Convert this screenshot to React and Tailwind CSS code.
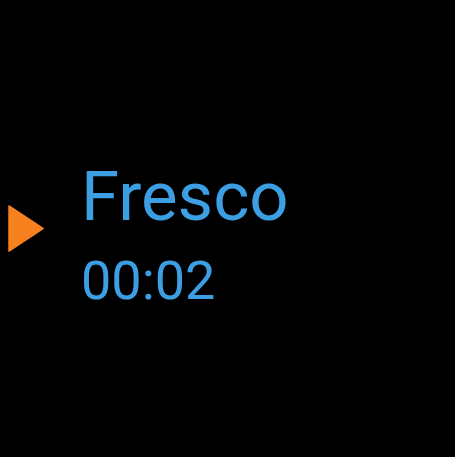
import React from "react";

export default function App() {
  return (
    <div className="w-full h-[457px] bg-black overflow-hidden" style={{ fontFamily: "Roboto, 'Liberation Sans', sans-serif" }}>
      <div className="flex items-start pl-[8px] pt-[162px]">
        {/* play marker */}
        <svg width="36" height="47" viewBox="0 0 36 47" className="mt-[43px] shrink-0">
          <path d="M1 1 L35 23.5 L1 46 Z" fill="#f7801f" stroke="#f7801f" strokeWidth="1.5" strokeLinejoin="round" />
        </svg>

        {/* title + time */}
        <div className="ml-[37px] flex flex-col text-[#3d9fe3]">
          <div className="text-[69px] leading-none">Fresco</div>
          <div className="text-[54px] leading-none mt-[23px]">00:02</div>
        </div>
      </div>
    </div>
  );
}
